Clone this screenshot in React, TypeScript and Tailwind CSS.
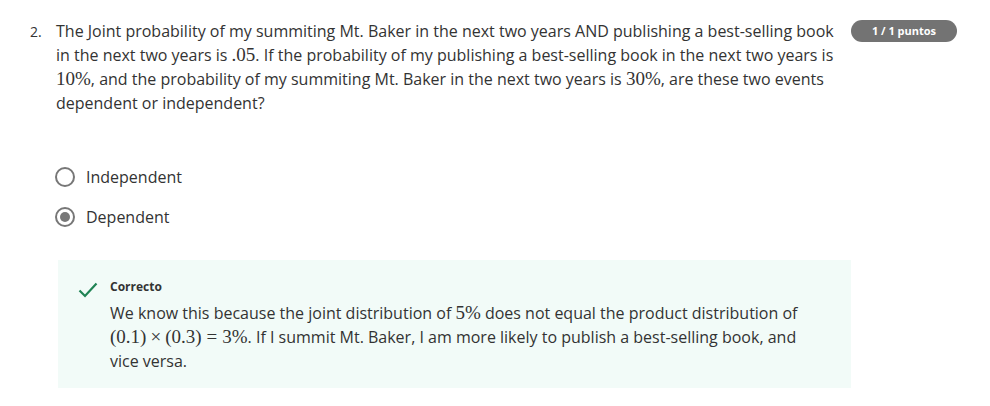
import React from "react";

const M = ({ children }: { children: React.ReactNode }) => (
  <span className="text-[19px] leading-none" style={{ fontFamily: '"Liberation Serif", "DejaVu Serif", serif' }}>
    {children}
  </span>
);

const Radio = ({ checked, label }: { checked?: boolean; label: string }) => (
  <div className="flex h-[40px] items-center">
    <span className="flex h-[20px] w-[20px] items-center justify-center rounded-full border-2 border-[#777777]">
      {checked && <span className="h-[10px] w-[10px] rounded-full bg-[#777777]" />}
    </span>
    <span className="ml-[11px] text-[16px] text-[#333333]">{label}</span>
  </div>
);

export default function App() {
  return (
    <div
      className="h-[406px] w-[990px] bg-white text-[#333333]"
      style={{ fontFamily: '"Open Sans", "Noto Sans", sans-serif' }}
    >
      <div className="flex pl-[30px] pt-[19px]">
        <div className="w-[26px] pt-[2px] text-[14px] leading-[22px]">2.</div>
        <div className="w-[784px] text-[16px] leading-[24px]">
          The Joint probability of my summiting Mt. Baker in the next two years AND publishing a best-selling book in
          the next two years is <M>.05</M>. If the probability of my publishing a best-selling book in the next two
          years is <M>10%</M>, and the probability of my summiting Mt. Baker in the next two years is <M>30%</M>, are
          these two events dependent or independent?
        </div>
        <div className="ml-[11px] mt-[1px] flex h-[22px] w-[106px] items-center justify-center rounded-full bg-[#737373] text-[11px] font-bold text-white">
          1 / 1 puntos
        </div>
      </div>

      <div className="ml-[55px] mt-[42px]">
        <Radio label="Independent" />
        <Radio checked label="Dependent" />
      </div>

      <div className="ml-[58px] mt-[23px] flex h-[128px] w-[793px] bg-[#f2fbf8] pl-[20px] pt-[18px]">
        <svg width="20" height="20" viewBox="0 0 20 20" className="mt-[2px] shrink-0">
          <path d="M1.5 10.5 L7 16 L18.5 3.5" fill="none" stroke="#1f8354" strokeWidth="2.2" />
        </svg>
        <div className="ml-[12px] w-[715px]">
          <div className="text-[12px] font-bold leading-[18px] text-[#333333]">Correcto</div>
          <div className="mt-[5px] text-[16px] leading-[24px]">
            We know this because the joint distribution of <M>5%</M> does not equal the product distribution of{" "}
            <M>
              (0.1)<span className="mx-[4px]">×</span>(0.3)<span className="mx-[5px]">=</span>3%
            </M>
            . If I summit Mt. Baker, I am more likely to publish a best-selling book, and vice versa.
          </div>
        </div>
      </div>
    </div>
  );
}
